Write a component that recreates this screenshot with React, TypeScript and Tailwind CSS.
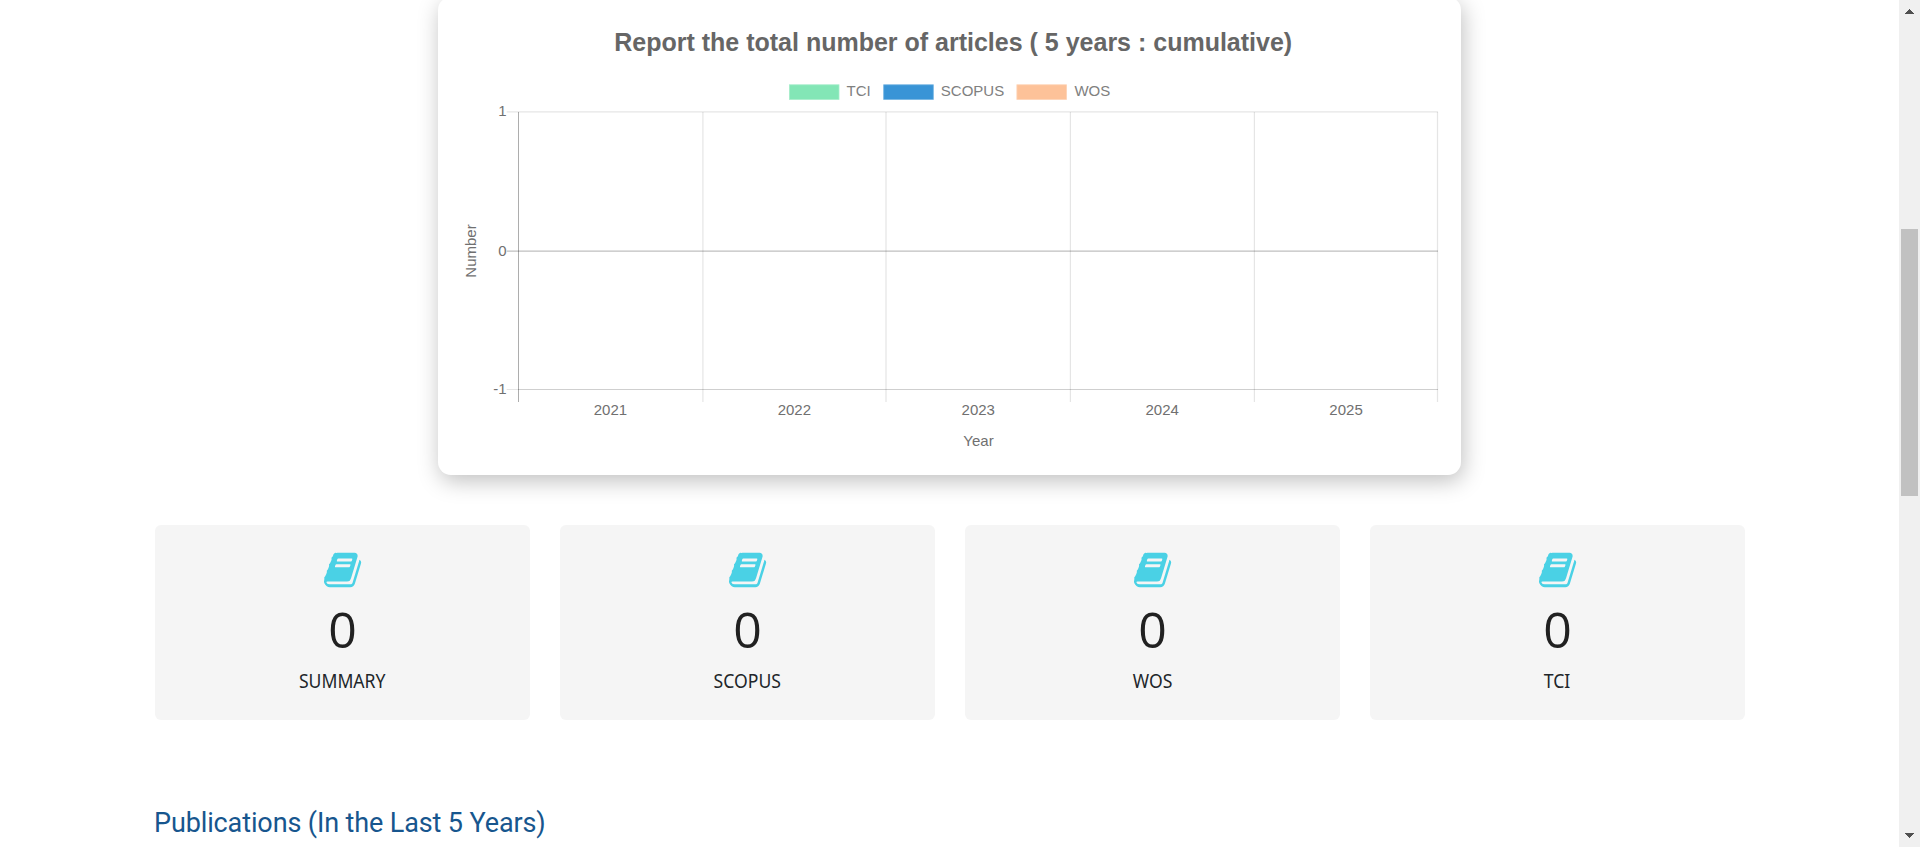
const BOOK_PATH =
  "M1639 478q40 57 18 129l-275 906q-19 64-76.500 107.500t-122.500 43.500h-923q-77 0-148.500-53.500t-99.500-131.500q-24-67-2-127 0-4 3-27t4-37q1-8-3-21.500t-3-19.500q2-11 8-21t16.500-23.500 16.500-23.500q23-38 45-91.500t30-91.500q3-10 .5-30t-.5-28q3-11 17-28t17-23q21-36 42-92t25-90q1-9-2.500-32t.5-28q4-13 22-30.500t22-22.500q19-26 42.500-84.500t27.500-96.500q1-8-3-25.500t-2-26.500q2-8 9-18t18-23 17-21q8-12 16.500-30.500t15-35 16-36 19.500-32 26.500-23.500 36-11.500 47.500 5.500l-1 3q38-9 51-9h761q74 0 114 56t18 130l-274 906q-36 119-71.500 153.500t-128.500 34.500h-869q-27 0-38 15-11 16-1 43 24 70 144 70h923q29 0 56-15.500t35-41.500l300-987q7-22 5-57 38 15 59 43zm-1064 2q-4 13 2 22.500t20 9.500h608q13 0 25.500-9.500t16.500-22.500l21-64q4-13-2-22.500t-20-9.500h-608q-13 0-25.500 9.500t-16.500 22.500zm-83 256q-4 13 2 22.500t20 9.500h608q13 0 25.500-9.500t16.500-22.500l21-64q4-13-2-22.500t-20-9.500h-608q-13 0-25.500 9.500t-16.500 22.500z";

const legend = [
  { label: "TCI", x: 351, fill: "#83e6b6", stroke: "#a5edca", textX: 408.5 },
  { label: "SCOPUS", x: 445.3, fill: "#3994d6", stroke: "#71b2e2", textX: 502.8 },
  { label: "WOS", x: 578.5, fill: "#fdc299", stroke: "#fdd2b4", textX: 636.4 },
];

const years = ["2021", "2022", "2023", "2024", "2025"];
const gridLines = [264.9, 448, 632.4, 816.4, 999.5];
const LEFT = 80.5;
const STEP = 183.9;

function Chart() {
  return (
    <svg width="1023" height="475" viewBox="0 0 1023 475" className="block font-['Liberation_Sans',Arial,sans-serif] text-[15px]">
      <text x="515.2" y="51" textAnchor="middle" fill="#666" className="text-[25px] font-bold">
        Report the total number of articles ( 5 years : cumulative)
      </text>
      {legend.map((l) => (
        <g key={l.label}>
          <rect x={l.x + 0.4} y="84.8" width="49.6" height="14.6" fill={l.fill} stroke={l.stroke} strokeWidth="0.8" />
          <text x={l.textX} y="96" fill="#808080">{l.label}</text>
        </g>
      ))}
      {gridLines.map((x) => (
        <line key={x} x1={x} x2={x} y1="112" y2="402" stroke="#000" strokeOpacity="0.1" strokeWidth="1.25" />
      ))}
      <line x1={LEFT} x2={LEFT} y1="112" y2="402" stroke="#000" strokeOpacity="0.32" strokeWidth="1" />
      <line x1="68.700" x2="1000" y1="111.800" y2="111.800" stroke="#000" strokeOpacity="0.1" strokeWidth="1.25" />
      <line x1="68.700" x2="1000" y1="251" y2="251" stroke="#000" strokeOpacity="0.25" strokeWidth="1.25" />
      <line x1="68.700" x2="80" y1="389.500" y2="389.500" stroke="#000" strokeOpacity="0.1" strokeWidth="1" />
      <line x1="80" x2="1000" y1="389.500" y2="389.500" stroke="#000" strokeOpacity="0.19" strokeWidth="1" />
      <g fill="#707070">
        <text x="68.500" y="116" textAnchor="end">1</text>
        <text x="68.500" y="255.700" textAnchor="end">0</text>
        <text x="68.500" y="393.500" textAnchor="end">-1</text>
        {years.map((y, i) => (
          <text key={y} x={LEFT + STEP * (i + 0.5)} y="415" textAnchor="middle">{y}</text>
        ))}
        <text x="540.500" y="446" textAnchor="middle">Year</text>
        <text transform="translate(38 251) rotate(-90)" textAnchor="middle">Number</text>
      </g>
    </svg>
  );
}

function StatCard({ label }: { label: string }) {
  return (
    <div className="flex h-[195px] flex-col items-center rounded-[6px] bg-[#f5f5f5] pt-[25px]">
      <svg width="40" height="40" viewBox="0 0 1792 1792" fill="#4ad1e5" className="ml-[2px]">
        <path d={BOOK_PATH} />
      </svg>
      <div className="mt-[9px] font-['Open_Sans','Noto_Sans',sans-serif] text-[50px] leading-[60px] font-normal text-[#212121]">0</div>
      <div className="mt-[7px] origin-center scale-x-[0.88] font-['Noto_Sans',sans-serif] text-[20px] leading-[30px] text-[#212529]">{label}</div>
    </div>
  );
}

export default function App() {
  return (
    <div className="flex h-[847px] w-full overflow-hidden bg-white">
      <main className="flex min-w-0 flex-1 flex-col">
        <section className="-mt-[3px] ml-[438px] h-[478px] w-[1023px] shrink-0 rounded-[13px] bg-white pt-[3px] shadow-[2px_6px_22px_rgba(0,0,0,0.25)]">
          <Chart />
        </section>
        <section className="mt-[50px] ml-[155px] grid w-[1590px] shrink-0 grid-cols-4 gap-[30px]">
          {["SUMMARY", "SCOPUS", "WOS", "TCI"].map((label) => (
            <StatCard key={label} label={label} />
          ))}
        </section>
        <h2 className="mt-[83px] ml-[154px] shrink-0 font-[Roboto,sans-serif] text-[27px] leading-10 tracking-[-0.12px] whitespace-nowrap text-[#17568e]">
          Publications (In the Last 5 Years)
        </h2>
      </main>
      <aside className="flex w-[21px] shrink-0 flex-col items-center bg-[#f0f0f0]">
        <svg width="9" height="5" viewBox="0 0 9 5" className="mt-[9px]" fill="#505050" shapeRendering="crispEdges">
          <path d="M4 0h1v1h1v1h1v1h1v1h1v1H0V4h1V3h1V2h1V1h1z" />
        </svg>
        <div className="mt-[215px] h-[267px] w-[17px] bg-[#c1c1c1]" />
        <svg width="9" height="5" viewBox="0 0 9 5" className="mt-auto mb-[9px]" fill="#505050" shapeRendering="crispEdges">
          <path d="M0 0h9v1H8v1H7v1H6v1H5v1H4V4H3V3H2V2H1V1H0z" />
        </svg>
      </aside>
    </div>
  );
}
